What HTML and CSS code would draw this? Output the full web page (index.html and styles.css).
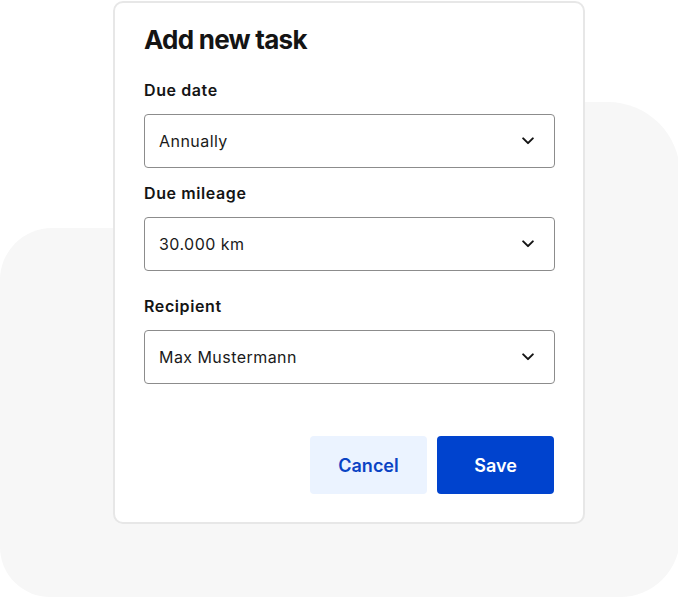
FILE: index.html
```html
<!DOCTYPE html>
<html lang="en">
<head>
<meta charset="utf-8">
<title>Add new task</title>
<link rel="stylesheet" href="styles.css">
</head>
<body>
<div class="stage">
  <div class="backdrop backdrop-left"></div>
  <div class="backdrop backdrop-right"></div>
  <div class="card">
    <h1 class="title">Add new task</h1>
    <div class="field field-first">
      <div class="label">Due date</div>
      <div class="select">
        <span class="value">Annually</span>
        <svg class="chev" width="12" height="8" viewBox="0 0 12 8"><path d="M1.2 1.4 6 6.1l4.8-4.7" fill="none" stroke="#141414" stroke-width="2" stroke-linecap="round" stroke-linejoin="round"/></svg>
      </div>
    </div>
    <div class="field field-second">
      <div class="label">Due mileage</div>
      <div class="select">
        <span class="value">30.000 km</span>
        <svg class="chev" width="12" height="8" viewBox="0 0 12 8"><path d="M1.2 1.4 6 6.1l4.8-4.7" fill="none" stroke="#141414" stroke-width="2" stroke-linecap="round" stroke-linejoin="round"/></svg>
      </div>
    </div>
    <div class="field field-third">
      <div class="label">Recipient</div>
      <div class="select">
        <span class="value">Max Mustermann</span>
        <svg class="chev" width="12" height="8" viewBox="0 0 12 8"><path d="M1.2 1.4 6 6.1l4.8-4.7" fill="none" stroke="#141414" stroke-width="2" stroke-linecap="round" stroke-linejoin="round"/></svg>
      </div>
    </div>
    <div class="actions">
      <button class="btn btn-cancel">Cancel</button>
      <button class="btn btn-save">Save</button>
    </div>
  </div>
</div>
</body>
</html>
```

FILE: styles.css
```css
html, body {
  margin: 0;
  padding: 0;
  background: #ffffff;
}

body {
  font-family: Inter, "Noto Sans", sans-serif;
  color: #141414;
}

.stage {
  position: relative;
  width: 678px;
  height: 598px;
  overflow: hidden;
  padding-top: 1px;
  box-sizing: border-box;
}

.backdrop {
  position: absolute;
  background: #f7f7f7;
}

.backdrop-left {
  left: 0;
  top: 228px;
  width: 400px;
  height: 369px;
  border-radius: 52px 0 0 50px;
}

.backdrop-right {
  left: 300px;
  top: 102px;
  width: 380px;
  height: 495px;
  border-radius: 0 72px 60px 0;
}

.card {
  position: relative;
  margin-left: 113px;
  width: 472px;
  box-sizing: border-box;
  background: #ffffff;
  border: 2px solid #e7e7e7;
  border-radius: 10px;
  padding: 21px 28px 28px 29px;
}

.title {
  margin: 0;
  font-size: 26px;
  line-height: 32px;
  font-weight: 700;
  letter-spacing: -0.75px;
  color: #141414;
}

.field-first { margin-top: 22px; }
.field-second { margin-top: 13px; }
.field-third { margin-top: 23px; }

.label {
  font-size: 16px;
  line-height: 24px;
  font-weight: 600;
  letter-spacing: 0.6px;
  color: #141414;
  margin-bottom: 12px;
}

.select {
  height: 54px;
  box-sizing: border-box;
  border: 1px solid #8c8c8c;
  border-radius: 4px;
  display: flex;
  align-items: center;
  justify-content: space-between;
  padding: 0 20px 0 14px;
}

.value {
  font-size: 16px;
  line-height: 24px;
  letter-spacing: 0.45px;
  color: #1a1a1a;
}

.chev {
  display: block;
}

.actions {
  margin-top: 52px;
  display: flex;
  justify-content: flex-end;
  gap: 10px;
  padding-right: 1px;
}

.btn {
  width: 117px;
  height: 58px;
  border: none;
  border-radius: 4px;
  font-family: Inter, "Noto Sans", sans-serif;
  font-size: 18px;
  font-weight: 600;
  cursor: pointer;
}

.btn-cancel {
  background: #ebf3ff;
  color: #0a43c4;
}

.btn-save {
  background: #0043ce;
  color: #ffffff;
}
```
